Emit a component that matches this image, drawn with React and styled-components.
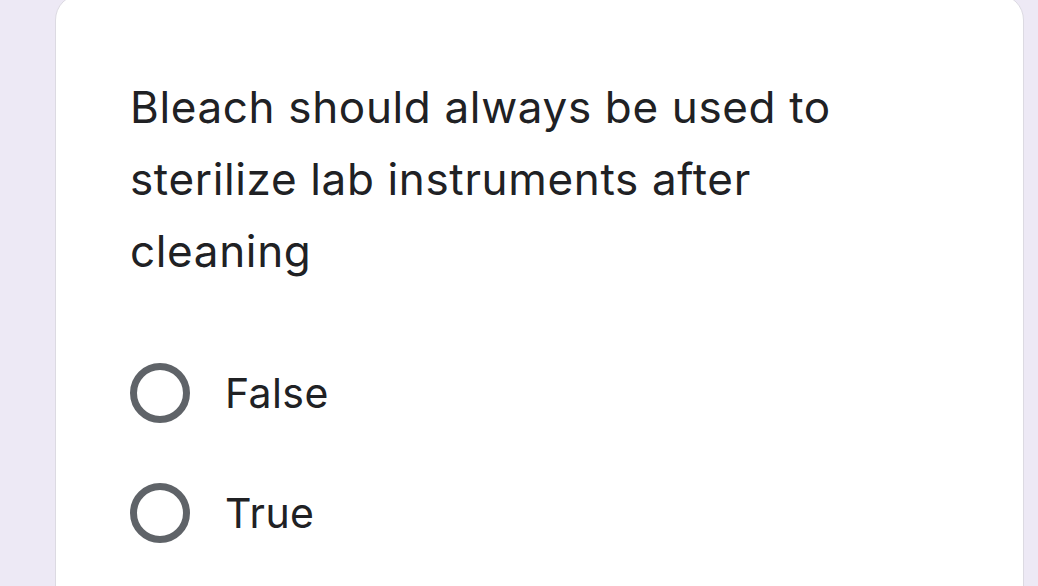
import React from "react";
import styled, { createGlobalStyle } from "styled-components";

const options = ["False", "True"];

const GlobalStyle = createGlobalStyle`
  html, body {
    margin: 0;
    padding: 0;
    background: #ede9f5;
    font-family: Inter, Roboto, Arial, sans-serif;
    overflow: hidden;
  }
`;

const Page = styled.div`
  width: 1038px;
  height: 586px;
  padding: 0 14px 0 55px;
  box-sizing: border-box;
  overflow: hidden;
`;

const Card = styled.div`
  margin-top: -6px;
  height: 620px;
  background: #ffffff;
  border: 1px solid #dcdae2;
  border-radius: 26px;
  padding: 76px 74px 0;
  box-sizing: border-box;
`;

const Question = styled.div`
  font-size: 44px;
  line-height: 72px;
  letter-spacing: 0.65px;
  color: #202124;
  width: 760px;
`;

const Options = styled.div`
  margin-top: 76px;
  display: flex;
  flex-direction: column;
  gap: 60px;
`;

const Option = styled.label`
  display: flex;
  align-items: center;
  gap: 35px;
  font-size: 41px;
  letter-spacing: 0.4px;
  color: #202124;
`;

const Radio = styled.span`
  width: 60px;
  height: 60px;
  border: 7px solid #5f6368;
  border-radius: 50%;
  box-sizing: border-box;
  flex-shrink: 0;
`;

export default function App() {
  return (
    <>
      <GlobalStyle />
      <Page>
        <Card>
          <Question>
            Bleach should always be used to sterilize lab instruments after
            cleaning
          </Question>
          <Options>
            {options.map((o) => (
              <Option key={o}>
                <Radio />
                {o}
              </Option>
            ))}
          </Options>
        </Card>
      </Page>
    </>
  );
}
